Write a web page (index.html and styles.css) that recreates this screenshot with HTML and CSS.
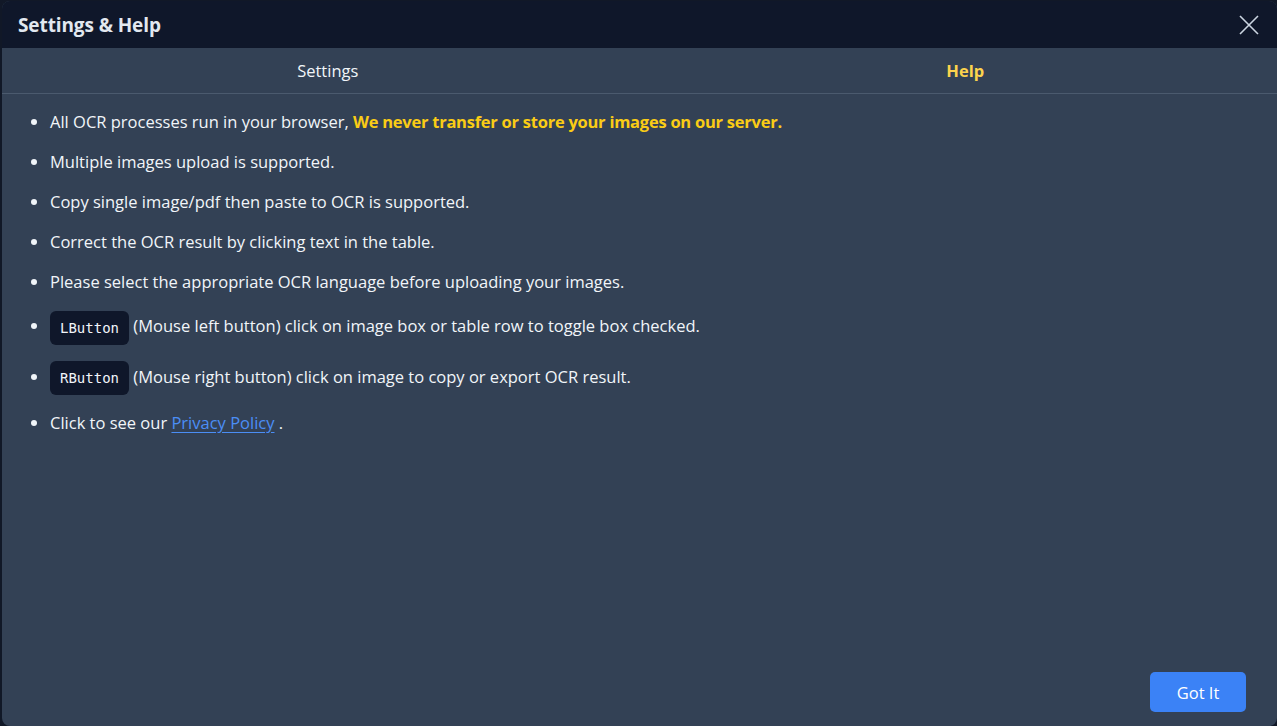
FILE: index.html
```html
<!DOCTYPE html>
<html>
   <head>
      <meta http-equiv="Content-Type" content="text/html; charset=UTF-8" />
      <title>Settings &amp; Help</title>
      <link rel="stylesheet" href="styles.css">
   </head>
   <body>
      <div class="modal">
         <div class="modal-head">
            <h2>Settings &amp; Help</h2>
            <button class="close" aria-label="Close">
               <svg width="20" height="20" viewBox="0 0 20 20"><path d="M1 1 L19 19 M19 1 L1 19" stroke="#cbd5e1" stroke-width="1.6" fill="none"/></svg>
            </button>
         </div>
         <div class="tabs">
            <div class="tab">Settings</div>
            <div class="tab active">Help</div>
         </div>
         <ul class="help">
            <li>All OCR processes run in your browser, <b class="warn">We never transfer or store your images on our server.</b></li>
            <li>Multiple images upload is supported.</li>
            <li>Copy single image/pdf then paste to OCR is supported.</li>
            <li>Correct the OCR result by clicking text in the table.</li>
            <li>Please select the appropriate OCR language before uploading your images.</li>
            <li class="key-row"><kbd>LButton</kbd> (Mouse left button) click on image box or table row to toggle box checked.</li>
            <li class="key-row"><kbd>RButton</kbd> (Mouse right button) click on image to copy or export OCR result.</li>
            <li>Click to see our <a href="#">Privacy Policy</a> .</li>
         </ul>
         <div class="modal-foot">
            <button class="ok">Got It</button>
         </div>
      </div>
   </body>
</html>
```

FILE: styles.css
```css
html, body { margin:0; height:100%; }
body { background:#111827; font-family:'Open Sans','Noto Sans',sans-serif; color:#f1f5f9; padding:1px 0 0 2px; box-sizing:border-box; overflow:hidden; }
.modal { height:725px; background:#334155; border-radius:8px; display:flex; flex-direction:column; overflow:hidden; }
.modal-head { height:47px; background:#0f172a; display:flex; align-items:center; justify-content:space-between; padding:0 16px 0 16px; flex-shrink:0; }
.modal-head h2 { margin:0; font-size:19px; font-weight:700; color:#e2e8f0; letter-spacing:-0.1px; }
.close { background:none; border:0; padding:0; width:20px; height:20px; cursor:pointer; margin-right:2px; }
.tabs { display:flex; height:45px; border-bottom:1px solid #4b5a6e; flex-shrink:0; }
.tab { flex:1; display:flex; align-items:center; justify-content:center; font-size:16.5px; color:#f1f5f9; padding-left:14px; }
.tab.active { color:#fcd34d; font-weight:700; }
.help { flex:1; margin:0; padding:8px 0 0 48px; list-style:disc; font-size:16.5px; }
.help li { line-height:24px; padding:8px 0; }
.help li.key-row { padding:7px 0 8px; line-height:34px; }
.warn { color:#facc15; letter-spacing:-0.25px; }
kbd { display:inline-block; font-family:'DejaVu Sans Mono','Liberation Mono',monospace; font-size:14px; line-height:34px; padding:0 10px; background:#0f172a; border-radius:6px; color:#f1f5f9; vertical-align:middle; }
a { color:#4b8ef5; text-decoration:underline; text-underline-offset:3px; }
.modal-foot { display:flex; justify-content:flex-end; padding:0 31px 14px 0; }
.ok { font-family:inherit; font-size:16.5px; color:#fff; background:#3b82f6; border:0; border-radius:5px; width:96px; height:40px; cursor:pointer; }
```
